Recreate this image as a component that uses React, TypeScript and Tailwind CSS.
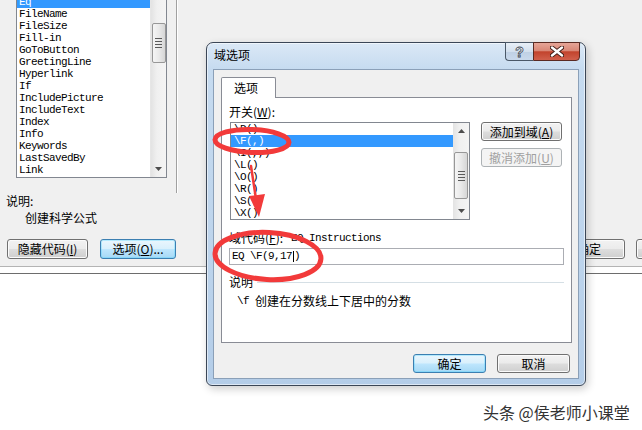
import clsx from 'clsx'

// ── Shared bits ───────────────────────────────────────────────

const mono = "font-['Liberation_Mono','DejaVu_Sans_Mono',monospace] text-[11px] tracking-[-0.6px]"

type BtnKind = 'normal' | 'focus' | 'disabled'

function Btn({ kind = 'normal', className, children }: { kind?: BtnKind; className?: string; children: React.ReactNode }) {
  return (
    <div
      className={clsx(
        'flex shrink-0 items-center justify-center rounded-[3px] border text-[12px] leading-none',
        kind === 'normal' &&
          'border-[#707070] bg-[linear-gradient(to_bottom,#f2f2f2_0%,#ebebeb_48%,#dddddd_52%,#cfcfcf_100%)] shadow-[inset_0_0_0_1px_#fbfbfb]',
        kind === 'focus' &&
          'border-[#3c7fb1] bg-[linear-gradient(to_bottom,#eaf6fd_0%,#d9f0fc_48%,#bee6fd_52%,#a7d9f5_100%)] shadow-[inset_0_0_0_1px_#48d1ff55]',
        kind === 'disabled' && 'border-[#adb2b5] bg-[#f4f4f4] text-[#a0a0a0]',
        className,
      )}
    >
      {children}
    </div>
  )
}

function Arrow({ up }: { up?: boolean }) {
  return (
    <div className="flex h-[16px] items-center justify-center">
      <svg width="7" height="4" viewBox="0 0 7 4">
        <polygon points={up ? '3.5,0 7,4 0,4' : '0,0 7,0 3.5,4'} fill="#4d4d4d" />
      </svg>
    </div>
  )
}

function Thumb({ className }: { className?: string }) {
  return (
    <div
      className={clsx(
        'mx-auto flex w-[14px] flex-col items-center justify-center gap-[2px] rounded-[2px] border border-[#979797] bg-[linear-gradient(to_right,#f5f5f5,#e9e9e9_50%,#d6d6d6)]',
        className,
      )}
    >
      {[0, 1, 2, 3].map(i => (
        <div key={i} className="h-px w-[7px] bg-[#5a5a5a]" />
      ))}
    </div>
  )
}

const u = (c: string) => <span className="underline underline-offset-1">{c}</span>

// ── Background window ─────────────────────────────────────────

const fields = [
  'FileName', 'FileSize', 'Fill-in', 'GoToButton', 'GreetingLine', 'Hyperlink', 'If',
  'IncludePicture', 'IncludeText', 'Index', 'Info', 'Keywords', 'LastSavedBy', 'Link',
]

function BackWindow() {
  return (
    <>
      <div className="flex h-[267px] flex-col border-b border-[#b4b4b4] bg-[#f0f0f0]">
        <div className="flex h-[193px] shrink-0">
          <div className="ml-[16px] flex h-[178px] w-[151px] overflow-hidden border-x border-b border-[#828790] bg-white">
            <div className={clsx('flex-1 overflow-hidden', mono)}>
              <div className="mt-[-4px] flex h-[12px] items-center bg-[#3399ff] pl-[2px] text-white">Eq</div>
              {fields.map(f => (
                <div key={f} className="flex h-[12px] items-center pl-[2px]">{f}</div>
              ))}
            </div>
            <div className="flex w-[16px] flex-col border-l border-[#e6e6e6] bg-[linear-gradient(to_right,#e3e3e3,#f0f0f0_40%,#f4f4f4)]">
              <Thumb className="mt-[23px] h-[40px]" />
              <div className="mt-auto">
                <Arrow />
              </div>
            </div>
          </div>
          <div className="ml-[9px] h-[193px] w-[2px] border-l border-r border-l-[#a0a0a0] border-r-white" />
        </div>
        <div className="mt-[2px] pl-[6px] leading-[12px]">说明:</div>
        <div className="mt-[5px] pl-[25px] leading-[12px]">创建科学公式</div>
        <div className="mt-[15px] flex">
          <Btn className="ml-[7px] h-[20px] w-[81px]">隐藏代码({u('I')})</Btn>
          <Btn kind="focus" className="ml-[12px] h-[20px] w-[76px]">选项({u('O')})...</Btn>
          <Btn className="ml-[377px] h-[20px] w-[72px]">确定</Btn>
          <Btn className="ml-[11px] h-[20px] w-[72px]">取消</Btn>
        </div>
      </div>
      <div className="mt-[6px] border-t border-[#6d6d6d]" />
    </>
  )
}

// ── Dialog ────────────────────────────────────────────────────

const switches = ['\\D()', '\\F(,)', '\\I(,,)', '\\L()', '\\O()', '\\R()', '\\S()', '\\X()']

function CaptionButtons() {
  return (
    <div className="ml-auto mr-[5px] mt-[-1px] flex">
      <div className="flex h-[19px] w-[28px] items-center justify-center rounded-bl-[4px] border border-r-0 border-[#4a5868] bg-[linear-gradient(to_bottom,#e8eff7,#d3e0ee_50%,#bfd0e4_51%,#c9d9ec)]">
        <span className="font-['Liberation_Sans',sans-serif] text-[14px] font-bold leading-none text-white [-webkit-text-stroke:0.8px_#3a4552]">?</span>
      </div>
      <div className="flex h-[19px] w-[47px] items-center justify-center rounded-br-[4px] border border-[#5a2a22] bg-[linear-gradient(to_bottom,#e6a597,#d98877_45%,#c2432d_52%,#d0604c_100%)]">
        <svg width="14" height="11" viewBox="0 0 14 11">
          <path d="M2 1.5 L12 9.5 M12 1.5 L2 9.5" stroke="#3b1a14" strokeWidth="4.2" strokeLinecap="round" />
          <path d="M2 1.5 L12 9.5 M12 1.5 L2 9.5" stroke="#ffffff" strokeWidth="2.4" strokeLinecap="round" />
        </svg>
      </div>
    </div>
  )
}

function FieldOptions() {
  return (
    <div className="absolute left-[206px] top-[42px] flex h-[344px] w-[380px] flex-col rounded-t-[7px] rounded-b-[6px] border border-[#3b4656] bg-[linear-gradient(to_bottom,#dbe8f6,#c6dbf0_26px,#bdd4ec_60%,#b4cde8)] shadow-[inset_0_0_0_1px_rgba(255,255,255,0.55),2px_3px_8px_rgba(0,0,0,0.2)]">
      <div className="flex h-[26px] shrink-0 items-start">
        <span className="ml-[7px] mt-[6px] leading-[12px]">域选项</span>
        <CaptionButtons />
      </div>

      <div className="mx-[6px] mb-[6px] flex flex-1 flex-col border border-[#8ba0b8] bg-[#f0f0f0] pl-[7px] pt-[7px]">
        {/* tab */}
        <div className="relative z-10 -mb-px flex h-[21px] w-[55px] items-center rounded-t-[2px] border border-b-0 border-[#898c95] bg-white pl-[12px] leading-[12px]">
          选项
        </div>

        {/* panel */}
        <div className="flex h-[246px] w-[351px] flex-col border border-[#898c95] bg-white">
          <div className="mt-[8px] pl-[7px] leading-[12px]">开关({u('W')}):</div>

          <div className="ml-[8px] mt-[4px] flex">
            <div className="flex h-[98px] w-[240px] border border-[#828790] bg-white">
              <div className={clsx('flex-1', mono)}>
                {switches.map((s, i) => (
                  <div
                    key={s}
                    className={clsx('flex h-[12px] items-center pl-[3px]', i === 1 && 'bg-[#3399ff] text-white')}
                  >
                    {s}
                  </div>
                ))}
              </div>
              <div className="flex w-[16px] flex-col bg-[linear-gradient(to_right,#e3e3e3,#f0f0f0_40%,#f4f4f4)]">
                <Arrow up />
                <Thumb className="mt-[13px] h-[47px]" />
                <div className="mt-auto">
                  <Arrow />
                </div>
              </div>
            </div>
            <div className="ml-[11px] flex flex-col gap-[7px]">
              <Btn className="h-[19px] w-[81px]">添加到域({u('A')})</Btn>
              <Btn kind="disabled" className="h-[19px] w-[81px]">撤消添加({u('U')})</Btn>
            </div>
          </div>

          <div className="mt-[12px] flex pl-[7px] leading-[12px]">
            <span>域代码({u('F')}):</span>
            <span className={clsx('ml-[8px]', mono)}>EQ Instructions</span>
          </div>

          <div className={clsx('ml-[7px] mt-[4px] flex h-[17px] w-[335px] items-center border border-[#abadb3] bg-white pl-[2px]', mono)}>
            <span>EQ \F(9,17</span>
            <span className="mx-[0.5px] h-[11px] w-px bg-black" />
            <span>)</span>
          </div>

          <div className="ml-[7px] mr-[7px] mt-[11px] flex items-center leading-[12px]">
            <span>说明</span>
            <div className="ml-[4px] h-px flex-1 bg-[#d5dfe5]" />
          </div>

          <div className="mt-[7px] flex items-center pl-[15px] leading-[12px]">
            <span className={mono}>\f</span>
            <span className="ml-[6px]">创建在分数线上下居中的分数</span>
          </div>
        </div>

        <div className="mt-[11px] flex justify-end gap-[11px] pr-[8px]">
          <Btn kind="focus" className="h-[19px] w-[73px]">确定</Btn>
          <Btn className="h-[19px] w-[73px]">取消</Btn>
        </div>
      </div>
    </div>
  )
}

// ── Red annotations ───────────────────────────────────────────

function Marks() {
  const red = '#f23a3a'
  return (
    <svg className="pointer-events-none absolute inset-0" width="642" height="430" viewBox="0 0 642 430">
      <ellipse cx="252" cy="141" rx="37" ry="11.5" fill="none" stroke={red} strokeWidth="5" transform="rotate(2 252 141)" />
      <ellipse cx="268" cy="256" rx="53" ry="23.5" fill="none" stroke={red} strokeWidth="5" transform="rotate(3 268 256)" />
      <path d="M251 166 L256 199" stroke={red} strokeWidth="2.5" strokeLinecap="round" />
      <polygon points="249,196 265,194 259,217" fill={red} />
    </svg>
  )
}

// ── Page ──────────────────────────────────────────────────────

export default function App() {
  return (
    <div className="relative h-[430px] w-[642px] overflow-hidden bg-white font-['Noto_Sans_CJK_SC','Noto_Sans',sans-serif] text-[12px] text-black">
      <BackWindow />
      <FieldOptions />
      <Marks />
      <div className="absolute left-[483px] top-[402px] whitespace-nowrap font-['Noto_Sans_CJK_SC',sans-serif] text-[16px] leading-[20px] text-[#333] [text-shadow:0_0_2px_#fff]">
        头条 @侯老师小课堂
      </div>
    </div>
  )
}
